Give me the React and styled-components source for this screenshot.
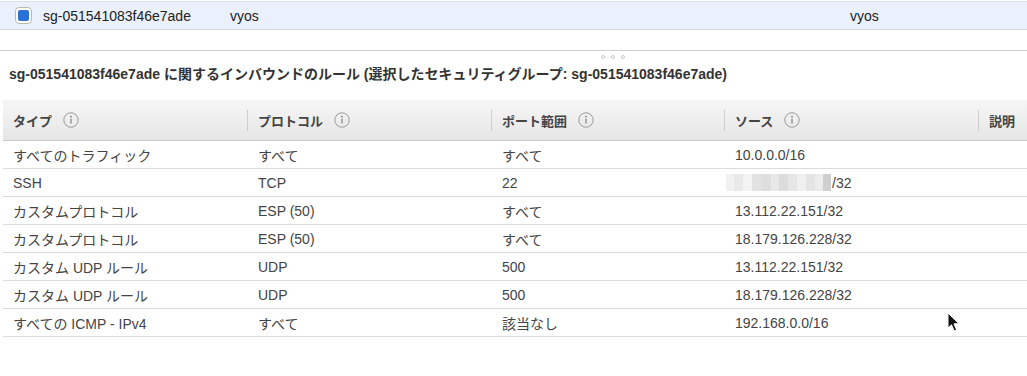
import React from "react";
import styled, { createGlobalStyle } from "styled-components";

const GlobalStyle = createGlobalStyle`
  body {
    margin: 0;
    background: #ffffff;
    font-family: "Liberation Sans", "Noto Sans CJK JP", Arial, sans-serif;
    font-size: 14px;
    color: #444;
  }
`;

const Page = styled.div`
  position: relative;
  width: 1027px;
  height: 376px;
  overflow: hidden;
`;

const SelectedRow = styled.div`
  display: grid;
  grid-template-columns: 43px 187px 620px 1fr;
  align-items: center;
  height: 27px;
  margin-top: 1px;
  background: #eaf1fc;
  border-top: 1px solid #d9e1ec;
  border-bottom: 1px solid #d2d9e3;
  color: #222;
  font-size: 14px;
`;

const CheckBox = styled.span`
  justify-self: center;
  margin-left: 3px;
  width: 17px;
  height: 17px;
  box-sizing: border-box;
  border: 1px solid #b9b9b9;
  border-radius: 4px;
  background: #fff;
  display: flex;
  align-items: center;
  justify-content: center;

  &::after {
    content: "";
    width: 11px;
    height: 11px;
    border-radius: 2px;
    background: #2c72d6;
  }
`;

const Divider = styled.div`
  margin-top: 20px;
  border-top: 1px solid #cfcfcf;
  height: 0;
`;

const Grip = styled.div`
  display: flex;
  gap: 6px;
  padding: 4px 0 0 601px;
  height: 4px;

  span {
    width: 4px;
    height: 4px;
    box-sizing: border-box;
    border: 1px solid #c8c8c8;
    border-radius: 50%;
  }
`;

const Title = styled.h2`
  margin: 7px 0 0 9px;
  font-size: 14px;
  font-weight: bold;
  color: #333;
  line-height: 16px;
`;

const Table = styled.div`
  margin: 18px 0 0 3px;
`;

const cols = "244px 244px 233px 254px 1fr";

const HeaderRow = styled.div`
  display: grid;
  grid-template-columns: ${cols};
  height: 40px;
  align-items: stretch;
  background: linear-gradient(#f6f6f6, #e6e6e6);
  border-bottom: 1px solid #c9c9c9;
`;

const HeaderCell = styled.div`
  position: relative;
  display: flex;
  align-items: center;
  gap: 11px;
  padding-left: ${(p) => (p.$first ? "10px" : "11px")};
  font-size: 13px;
  font-weight: bold;
  color: #444;
  white-space: nowrap;

  &::before {
    content: "";
    display: ${(p) => (p.$first ? "none" : "block")};
    position: absolute;
    left: 0;
    top: 10px;
    height: 21px;
    border-left: 1px solid #cdcdcd;
  }
`;

const InfoIcon = () => (
  <svg width="16" height="16" viewBox="0 0 16 16" aria-hidden="true">
    <circle cx="8" cy="8" r="7.2" fill="none" stroke="#999" strokeWidth="1" />
    <circle cx="8" cy="4.6" r="0.9" fill="#777" />
    <rect x="7.45" y="6.6" width="1.1" height="5" fill="#777" />
  </svg>
);

const BodyRow = styled.div`
  display: grid;
  grid-template-columns: ${cols};
  height: 27px;
  align-items: center;
  border-bottom: 1px solid #dcdcdc;
`;

const Cell = styled.div`
  padding-left: ${(p) => (p.$first ? "10px" : "11px")};
  color: #444;
  white-space: nowrap;
  display: flex;
  align-items: center;
`;

const Redacted = styled.span`
  display: inline-flex;
  height: 17px;
  margin-left: -9px;
  margin-right: 1px;
`;

const Pixel = styled.span`
  width: ${(p) => p.$w}px;
  height: 17px;
  background: ${(p) => p.$c};
`;

const Cursor = styled.svg`
  position: absolute;
  left: 947px;
  top: 312px;
`;

const pixels = [
  [8, "#f1f1f1"], [9, "#e9e9e9"], [9, "#f3f3f3"], [9, "#e2e2e2"], [10, "#dedede"],
  [8, "#e8e8e8"], [9, "#dcdcdc"], [9, "#e6e6e6"], [9, "#f0f0f0"], [9, "#e4e4e4"],
  [8, "#ececec"], [8, "#cfcfcf"],
];

const rows = [
  ["すべてのトラフィック", "すべて", "すべて", "10.0.0.0/16"],
  ["SSH", "TCP", "22", null],
  ["カスタムプロトコル", "ESP (50)", "すべて", "13.112.22.151/32"],
  ["カスタムプロトコル", "ESP (50)", "すべて", "18.179.126.228/32"],
  ["カスタム UDP ルール", "UDP", "500", "13.112.22.151/32"],
  ["カスタム UDP ルール", "UDP", "500", "18.179.126.228/32"],
  ["すべての ICMP - IPv4", "すべて", "該当なし", "192.168.0.0/16"],
];

const headers = [
  ["タイプ", true],
  ["プロトコル", true],
  ["ポート範囲", true],
  ["ソース", true],
  ["説明", false],
];

export default function App() {
  return (
    <Page>
      <GlobalStyle />
      <SelectedRow>
        <CheckBox />
        <span>sg-051541083f46e7ade</span>
        <span>vyos</span>
        <span>vyos</span>
      </SelectedRow>
      <Divider />
      <Grip>
        <span />
        <span />
        <span />
      </Grip>
      <Title>
        sg-051541083f46e7ade に関するインバウンドのルール (選択したセキュリティグループ: sg-051541083f46e7ade)
      </Title>
      <Table>
        <HeaderRow>
          {headers.map(([label, info], i) => (
            <HeaderCell key={label} $first={i === 0}>
              {label}
              {info && <InfoIcon />}
            </HeaderCell>
          ))}
        </HeaderRow>
        {rows.map((r, i) => (
          <BodyRow key={i}>
            <Cell $first>{r[0]}</Cell>
            <Cell>{r[1]}</Cell>
            <Cell>{r[2]}</Cell>
            <Cell>
              {r[3] ?? (
                <>
                  <Redacted>
                    {pixels.map(([w, c], j) => (
                      <Pixel key={j} $w={w} $c={c} />
                    ))}
                  </Redacted>
                  /32
                </>
              )}
            </Cell>
            <Cell />
          </BodyRow>
        ))}
      </Table>
      <Cursor width="14" height="22" viewBox="0 0 14 22">
        <path d="M1 1 L1 16 L4.5 12.8 L7.2 19 L9.6 18 L7 11.8 L12 11.8 Z" fill="#111" stroke="#fff" strokeWidth="1" />
      </Cursor>
    </Page>
  );
}
